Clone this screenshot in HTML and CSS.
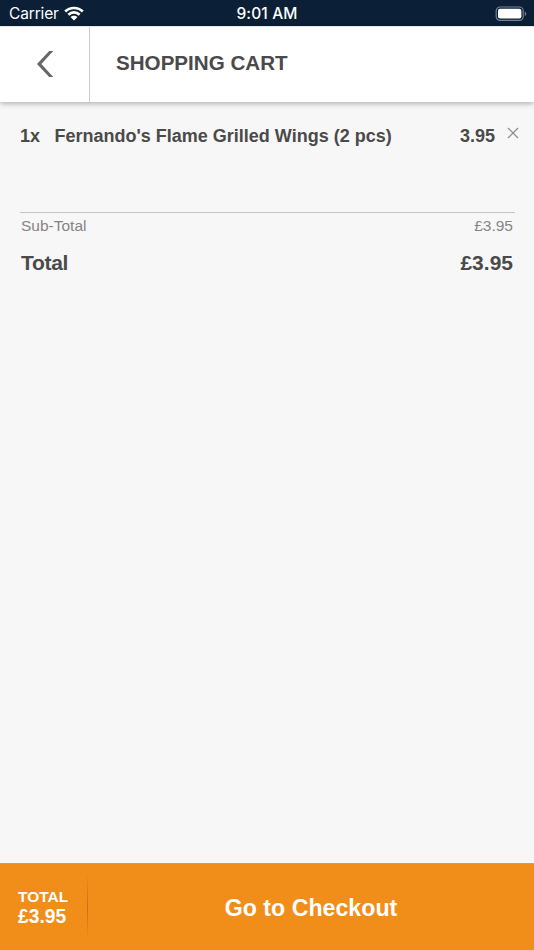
FILE: index.html
```html
<!DOCTYPE html>
<html lang="en">
<head>
<meta charset="utf-8">
<title>Shopping Cart</title>
<link rel="stylesheet" href="styles.css">
</head>
<body>
<div class="app">
  <div class="status-bar">
    <div class="carrier">
      <span>Carrier</span>
      <svg class="wifi" viewBox="0 0 20 15" width="20" height="15">
        <path d="M1.200 5.500C6 .8 14 .8 18.800 5.500M4.400 8.700c3.100-3 8.100-3 11.200 0" fill="none" stroke="#fff" stroke-width="2.700"/>
        <path d="M6.500 11.100c1.900-1.700 5.100-1.700 7 0L10 14.600z" fill="#fff"/>
      </svg>
    </div>
    <span class="clock">9:01 AM</span>
    <svg class="battery" viewBox="0 0 33 16" width="33" height="16">
      <rect x="1.200" y="1" width="27" height="13.400" rx="3.800" fill="none" stroke="#748193" stroke-width="1.200"/>
      <rect x="3" y="2.800" width="23.400" height="9.800" rx="2" fill="#fff"/>
      <path d="M29.800 5.400c2 .9 2 3.700 0 4.600z" fill="#748193"/>
    </svg>
  </div>
  <header class="header">
    <button class="back" aria-label="Back">
      <svg viewBox="0 0 18 28" width="18" height="28"><path d="M13.200 1H17.200L5.400 14 17.200 27H13.200L1 14z" fill="#666"/></svg>
    </button>
    <h1 class="title">SHOPPING CART</h1>
  </header>
  <main class="cart">
    <div class="item">
      <span class="qty">1x</span>
      <span class="name">Fernando's Flame Grilled Wings (2 pcs)</span>
      <span class="price">3.95</span>
      <button class="remove" aria-label="Remove">
        <svg viewBox="0 0 12 12" width="12" height="12"><path d="M1 1l10 10M11 1L1 11" stroke="#8c8c8c" stroke-width="1.200"/></svg>
      </button>
    </div>
    <div class="summary">
      <div class="row subtotal"><span>Sub-Total</span><span>£3.95</span></div>
      <div class="row total"><span class="total-label">Total</span><span>£3.95</span></div>
    </div>
  </main>
  <footer class="footer">
    <div class="footer-total"><span class="label">TOTAL</span><span class="amount">£3.95</span></div>
    <button class="checkout">Go to Checkout</button>
  </footer>
</div>
</body>
</html>
```
FILE: styles.css
```css
* { box-sizing: border-box; }
body { margin: 0; font-family: "Liberation Sans", Arial, sans-serif; color: #4a4a4a; }
button { margin: 0; padding: 0; border: 0; background: none; font: inherit; color: inherit; }
svg { display: block; }
.app { display: flex; flex-direction: column; height: 950px; background: #f7f7f7; }
.status-bar {
  display: grid; grid-template-columns: 1fr auto 1fr; align-items: center;
  height: 26px; padding: 1px 6px 0 9px; background: #0b2036; color: #fff;
  font-family: Inter, sans-serif; font-size: 15.5px; line-height: 26px;
}
.carrier { display: flex; align-items: center; gap: 5px; letter-spacing: -.15px; }
.wifi { margin-bottom: 1px; }
.clock { margin-left: -3px; font-weight: 500; letter-spacing: .15px; }
.battery { justify-self: end; margin-bottom: 1px; }
.header {
  display: flex; height: 76px; background: #fff;
  border-top: 1px solid #e3e5e8; box-shadow: 0 1px 6px rgba(0,0,0,.35);
}
.back { display: flex; align-items: center; justify-content: center; width: 90px; padding-bottom: 1px; border-right: 1px solid #ccc; }
.title { margin: 0 0 0 26px; font-size: 20.6px; line-height: 71px; font-weight: 700; }
.cart { flex: 1; padding: 22px 19px 0 20px; }
.item { display: flex; height: 88px; font-size: 18px; line-height: 24px; font-weight: 700; }
.qty { width: 34.5px; }
.name { flex: 1; white-space: nowrap; }
.remove { align-self: flex-start; margin: 3px -4px 0 12px; }
.summary { border-top: 1px solid #c4c4c4; }
.row { display: flex; justify-content: space-between; padding: 0 2px 0 1px; }
.subtotal { font-size: 15.5px; line-height: 26px; color: #858585; }
.total { font-size: 21px; line-height: 48px; font-weight: 700; }
.total-label { letter-spacing: -.3px; }
.footer { display: flex; align-items: center; height: 87px; background: #f18d19; color: #fff; font-weight: 700; border-top: 1px solid #e5963d; }
.footer-total {
  display: flex; flex-direction: column; justify-content: center;
  width: 88px; height: 66px; padding: 0 0 0 18px;
  border-right: 1px solid; border-image: linear-gradient(#f18d19, #c8720f, #f18d19) 1;
}
.label { font-size: 15.5px; line-height: 19px; }
.amount { font-size: 19.3px; line-height: 21px; }
.checkout { flex: 1; padding-top: 2px; font-size: 23.2px; line-height: 30px; }
```
